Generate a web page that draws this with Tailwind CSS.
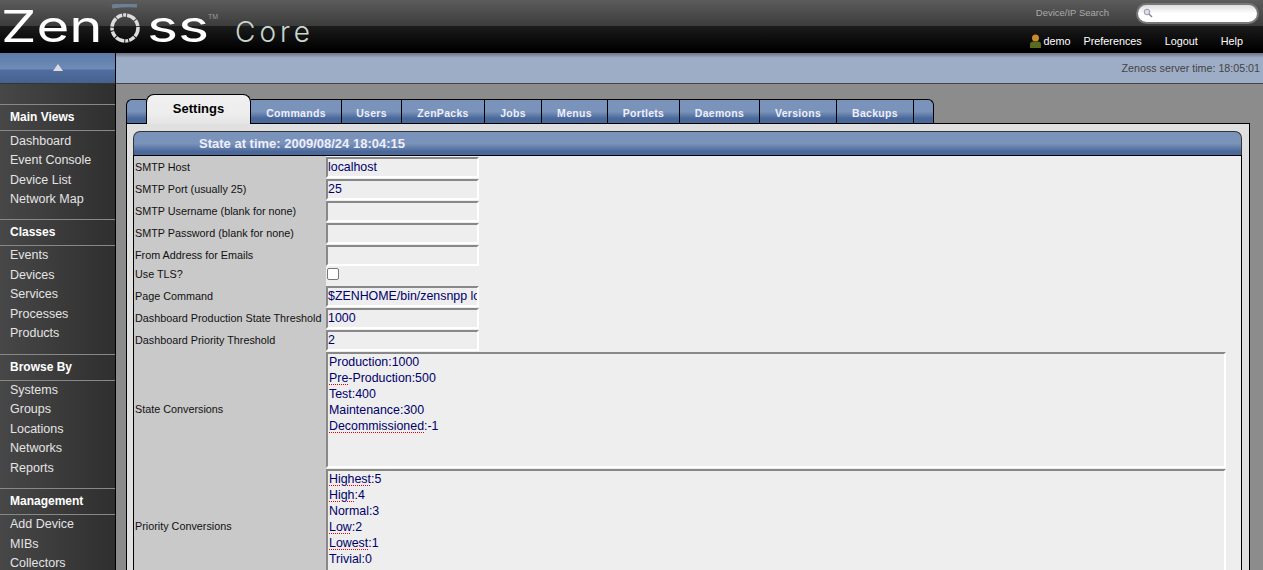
<!DOCTYPE html>
<html lang="en">
<head>
  <meta charset="utf-8">
  <meta name="viewport" content="width=device-width, initial-scale=1.0">
  <title>Zenoss Core</title>
  <script src="https://cdn.jsdelivr.net/npm/@tailwindcss/browser@4"></script>
</head>
<body class="h-[570px] overflow-hidden bg-[#8c8c8c] font-['Liberation_Sans',sans-serif] text-black">
  <header class="relative h-[53px] bg-[linear-gradient(#5c5c5c_0,#3c3c3c_26px,#1c1c1c_26px,#000_50px)]">
    <div class="flex items-start h-[53px] overflow-hidden">
      <span class="ml-[1px] mt-[1px] w-[106px] origin-left scale-x-[1.28] font-['Inter',sans-serif] font-normal text-[44px] leading-[50px] text-white">Zen</span>
      <svg class="w-[34px] h-[40px] ml-[1px] mt-[4px] shrink-0" viewBox="0 0 34 40">
        <path d="M4 2.500q12-2 25-1" fill="none" stroke="#6f7f93" stroke-width="4"/>
        <circle cx="17" cy="24" r="13" fill="none" stroke="#ddd" stroke-width="3.500" stroke-dasharray="9 1 6 1 3 1"/>
      </svg>
      <span class="ml-[5px] mt-[1px] w-[60px] origin-left scale-x-[1.34] font-['Inter',sans-serif] font-normal text-[44px] leading-[50px] text-white">ss</span>
      <span class="ml-[1px] mt-[12px] text-[7px] leading-[9px] text-[#999]">TM</span>
      <span class="ml-[17px] mt-[12px] font-['Inter',sans-serif] font-light text-[28px] leading-[40px] text-[#c8d6d0] tracking-[4px]">Core</span>
    </div>
    <div class="absolute top-0 right-0 flex items-center h-[26px] text-[9.5px] text-[#aaa]">
      <span class="mr-[27px]">Device/IP Search</span>
      <div class="w-[123px] h-[21px] mr-[4px] rounded-full bg-[linear-gradient(#ddd,#fff_50%)] border-2 border-[#777] flex items-center pl-[5px]">
        <svg class="w-[10px] h-[10px]" viewBox="0 0 10 10"><circle cx="4" cy="4" r="2.8" fill="#dde" stroke="#99a"/><path d="M6 6l3 3" stroke="#889" stroke-width="1.5"/></svg>
      </div>
    </div>
    <nav class="absolute top-[26px] right-[20px] h-[27px] pt-[3px] flex items-center text-[10.8px] text-white">
      <svg class="w-[11px] h-[14px] mr-[3px]" viewBox="0 0 11 14"><circle cx="5.5" cy="4" r="3.5" fill="#c98a2e"/><path d="M0 14v-3.500q0-3 3-3h5q3 0 3 3V14z" fill="#5a6a1e"/></svg>
      <a class="mr-[13px]">demo</a>
      <a class="mr-[23px]">Preferences</a>
      <a class="mr-[23px]">Logout</a>
      <a>Help</a>
    </nav>
  </header>

  <div class="flex h-[517px] overflow-hidden">
    <aside class="w-[116px] shrink-0 border-r border-black bg-[linear-gradient(90deg,#474747,#2f2f2f)] text-[12.5px] text-[#e4e4e4]">
      <div class="h-[31px] flex items-center justify-center border-b border-[#333] bg-[linear-gradient(#5d79a6_0,#6f8cb9_16px,#4f6d9f_17px,#46628f_100%)]">
        <div class="w-0 h-0 mt-[-2px] border-x-[5px] border-x-transparent border-b-[7px] border-b-[#ddd]"></div>
      </div>
      <section class="mt-[20px]">
        <h3 class="h-[27px] pb-[2px] border-y border-[#888] pl-[10px] flex items-center font-bold text-[12px] text-white">Main Views</h3>
        <ul class="pl-[10px] leading-[19.5px] pt-[0.7px]">
          <li>Dashboard</li><li>Event Console</li><li>Device List</li><li>Network Map</li>
        </ul>
      </section>
      <section class="mt-[9px]">
        <h3 class="h-[27px] pb-[1px] border-y border-[#888] pl-[10px] flex items-center font-bold text-[12px] text-white">Classes</h3>
        <ul class="pl-[10px] leading-[19.5px] pt-[0.7px]">
          <li>Events</li><li>Devices</li><li>Services</li><li>Processes</li><li>Products</li>
        </ul>
      </section>
      <section class="mt-[10px]">
        <h3 class="h-[27px] pb-[1px] border-y border-[#888] pl-[10px] flex items-center font-bold text-[12px] text-white">Browse By</h3>
        <ul class="pl-[10px] leading-[19.5px]">
          <li>Systems</li><li>Groups</li><li>Locations</li><li>Networks</li><li>Reports</li>
        </ul>
      </section>
      <section class="mt-[9.7px]">
        <h3 class="h-[27px] pb-[1px] border-y border-[#888] pl-[10px] flex items-center font-bold text-[12px] text-white">Management</h3>
        <ul class="pl-[10px] leading-[19.5px]">
          <li>Add Device</li><li>MIBs</li><li>Collectors</li>
        </ul>
      </section>
    </aside>

    <main class="flex-1 min-w-0">
      <div class="h-[31px] border-b border-[#444] bg-[linear-gradient(#6d7584,#9eadc6_5px)] text-right pr-[3px] pt-[8px] text-[10.7px] leading-[14px] text-[#444]">Zenoss server time: 18:05:01</div>

      <div class="ml-[10px] mr-[13px] mt-[10px]">
        <div class="flex items-start h-[29px] pt-[5px] text-[10.5px] font-bold text-[#eef] tracking-[0.3px]">
          <div class="w-[20px] h-[24px] rounded-tl-[6px] border-t border-l border-black bg-[linear-gradient(#7a93bb_0,#7a93bb_50%,#4a6899_80%)]"></div>
          <div class="relative z-10 w-[105px] h-[30px] -mt-[5px] rounded-t-[8px] border border-b-0 border-black bg-[linear-gradient(#f0f0f0,#eee_60%,#e4e4e4)] text-black text-[13px] text-center pt-[4px] tracking-normal">Settings</div>
          <div class="w-[91px] h-[24px] border-t border-r border-black bg-[linear-gradient(#7a93bb_0,#7a93bb_50%,#4a6899_80%)] text-center pt-[6px]">Commands</div>
          <div class="w-[60px] h-[24px] border-t border-r border-black bg-[linear-gradient(#7a93bb_0,#7a93bb_50%,#4a6899_80%)] text-center pt-[6px]">Users</div>
          <div class="w-[83px] h-[24px] border-t border-r border-black bg-[linear-gradient(#7a93bb_0,#7a93bb_50%,#4a6899_80%)] text-center pt-[6px]">ZenPacks</div>
          <div class="w-[57px] h-[24px] border-t border-r border-black bg-[linear-gradient(#7a93bb_0,#7a93bb_50%,#4a6899_80%)] text-center pt-[6px]">Jobs</div>
          <div class="w-[66px] h-[24px] border-t border-r border-black bg-[linear-gradient(#7a93bb_0,#7a93bb_50%,#4a6899_80%)] text-center pt-[6px]">Menus</div>
          <div class="w-[72px] h-[24px] border-t border-r border-black bg-[linear-gradient(#7a93bb_0,#7a93bb_50%,#4a6899_80%)] text-center pt-[6px]">Portlets</div>
          <div class="w-[80px] h-[24px] border-t border-r border-black bg-[linear-gradient(#7a93bb_0,#7a93bb_50%,#4a6899_80%)] text-center pt-[6px]">Daemons</div>
          <div class="w-[77px] h-[24px] border-t border-r border-black bg-[linear-gradient(#7a93bb_0,#7a93bb_50%,#4a6899_80%)] text-center pt-[6px]">Versions</div>
          <div class="w-[77px] h-[24px] border-t border-r border-black bg-[linear-gradient(#7a93bb_0,#7a93bb_50%,#4a6899_80%)] text-center pt-[6px]">Backups</div>
          <div class="w-[20px] h-[24px] rounded-tr-[6px] border-t border-r border-black bg-[linear-gradient(#7a93bb_0,#7a93bb_50%,#4a6899_80%)]"></div>
        </div>

        <div class="border border-black bg-[#e0e0e0] pl-[6px] pr-[7px] pt-[7px] h-[500px]">
          <div class="h-[24px] rounded-t-[7px] border-t border-x border-[#333] border-b-0 bg-[linear-gradient(#7a93bb_0,#7a93bb_50%,#4a6899_85%)] pl-[65px] pt-[4px] text-[13px] leading-[16px] font-bold text-[#eef]">State at time: 2009/08/24 18:04:15</div>
          <div class="border-x border-t border-black bg-[#eee] h-[480px]">
            <div class="grid grid-cols-[192px_1fr] text-[10.8px] leading-[12px] text-[#111]">
              <div class="bg-[#c9c9c9] h-[22px] pl-[1px] flex items-center">SMTP Host</div>
              <div><input class="block w-[153px] h-[21px] mt-[1px] border-2 border-[#888] border-r-white border-b-white bg-[#eee] pb-[2px] text-[12.4px] text-[#00006b]" value="localhost"></div>
              <div class="bg-[#c9c9c9] h-[22px] pl-[1px] flex items-center">SMTP Port (usually 25)</div>
              <div><input class="block w-[153px] h-[21px] mt-[1px] border-2 border-[#888] border-r-white border-b-white bg-[#eee] pb-[2px] text-[12.4px] text-[#00006b]" value="25"></div>
              <div class="bg-[#c9c9c9] h-[22px] pl-[1px] flex items-center">SMTP Username (blank for none)</div>
              <div><input class="block w-[153px] h-[21px] mt-[1px] border-2 border-[#888] border-r-white border-b-white bg-[#eee]"></div>
              <div class="bg-[#c9c9c9] h-[22px] pl-[1px] flex items-center">SMTP Password (blank for none)</div>
              <div><input class="block w-[153px] h-[21px] mt-[1px] border-2 border-[#888] border-r-white border-b-white bg-[#eee]"></div>
              <div class="bg-[#c9c9c9] h-[22px] pl-[1px] flex items-center">From Address for Emails</div>
              <div><input class="block w-[153px] h-[21px] mt-[1px] border-2 border-[#888] border-r-white border-b-white bg-[#eee]"></div>
              <div class="bg-[#c9c9c9] h-[19px] pl-[1px] pb-[3px] flex items-center">Use TLS?</div>
              <div class="flex items-center pb-[3px]"><input type="checkbox" class="block w-[12px] h-[12px] ml-[1px] appearance-none border border-[#777] rounded-[2px] bg-white"></div>
              <div class="bg-[#c9c9c9] h-[22px] pl-[1px] flex items-center">Page Command</div>
              <div><input class="block w-[153px] h-[21px] mt-[1px] border-2 border-[#888] border-r-white border-b-white bg-[#eee] pb-[2px] text-[12.4px] text-[#00006b]" value="$ZENHOME/bin/zensnpp localhost 444"></div>
              <div class="bg-[#c9c9c9] h-[22px] pl-[1px] flex items-center">Dashboard Production State Threshold</div>
              <div><input class="block w-[153px] h-[21px] mt-[1px] border-2 border-[#888] border-r-white border-b-white bg-[#eee] pb-[2px] text-[12.4px] text-[#00006b]" value="1000"></div>
              <div class="bg-[#c9c9c9] h-[22px] pl-[1px] flex items-center">Dashboard Priority Threshold</div>
              <div><input class="block w-[153px] h-[21px] mt-[1px] border-2 border-[#888] border-r-white border-b-white bg-[#eee] pb-[2px] text-[12.4px] text-[#00006b]" value="2"></div>
              <div class="bg-[#c9c9c9] h-[117px] pl-[1px] pb-[2px] flex items-center">State Conversions</div>
              <div class="h-[116px] mt-[1px] w-[900px] border-2 border-[#888] border-r-white border-b-white bg-[#eee] pl-[1px] text-[12.4px] leading-[16px] text-[#00006b]">
                <div>Production:1000</div>
                <div><span class="underline underline-offset-2 decoration-dotted decoration-red-600">Pre</span>-Production:500</div>
                <div>Test:400</div>
                <div>Maintenance:300</div>
                <div><span class="underline underline-offset-2 decoration-dotted decoration-red-600">Decommissioned</span>:-1</div>
              </div>
              <div class="bg-[#c9c9c9] h-[117px] pl-[1px] pb-[2px] flex items-center">Priority Conversions</div>
              <div class="h-[116px] mt-[1px] w-[900px] border-2 border-[#888] border-r-white border-b-white bg-[#eee] pl-[1px] text-[12.4px] leading-[16px] text-[#00006b]">
                <div><span class="underline underline-offset-2 decoration-dotted decoration-red-600">Highest</span>:5</div>
                <div><span class="underline underline-offset-2 decoration-dotted decoration-red-600">High</span>:4</div>
                <div>Normal:3</div>
                <div><span class="underline underline-offset-2 decoration-dotted decoration-red-600">Low</span>:2</div>
                <div><span class="underline underline-offset-2 decoration-dotted decoration-red-600">Lowest</span>:1</div>
                <div>Trivial:0</div>
              </div>
            </div>
          </div>
        </div>
      </div>
    </main>
  </div>
</body>
</html>
